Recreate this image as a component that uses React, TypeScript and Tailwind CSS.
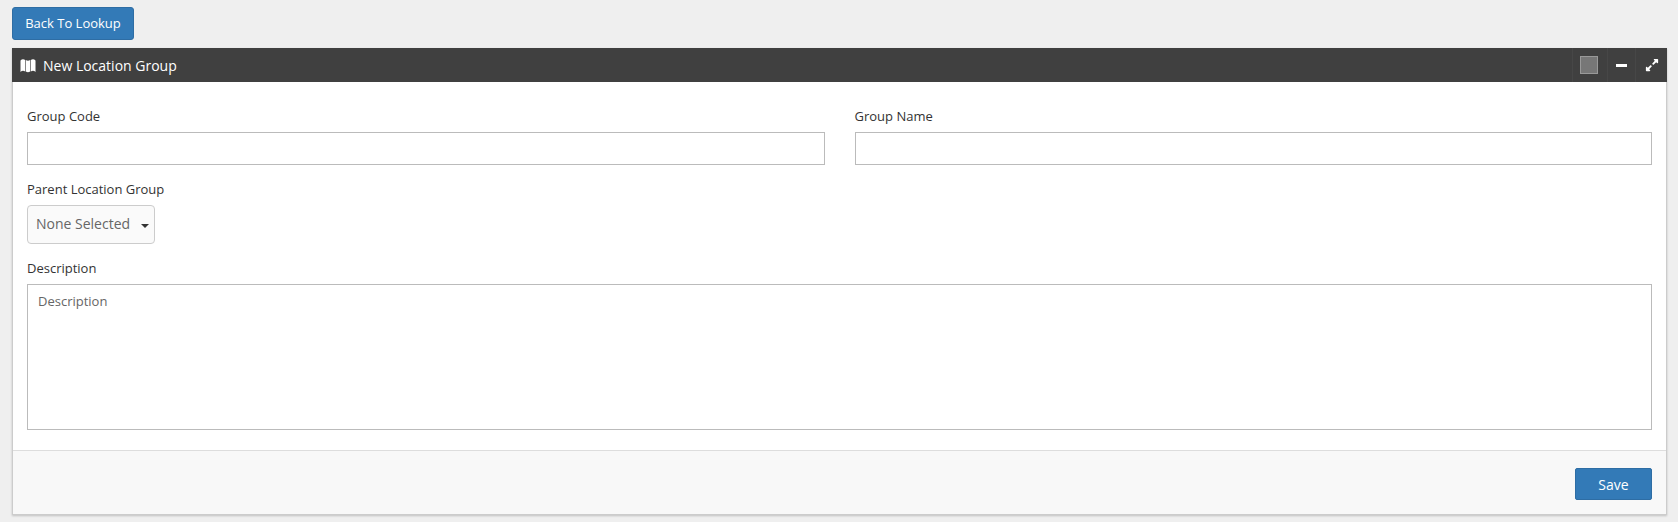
import React from "react";
import { FaExpandAlt } from "react-icons/fa";

export default function App() {
  return (
    <div className="min-h-[522px] bg-[#efefef] pt-[7px] pl-[12px] pr-[11px] text-[13px] text-[#333333] font-['Open_Sans',sans-serif]">
      <button className="block h-[33px] w-[122px] rounded-[3px] border border-[#2e6da4] bg-[#337ab7] text-[13px] text-white">
        Back To Lookup
      </button>
      <section className="mt-[8px] border-x border-b border-[#cccccc] bg-white shadow-[0_1px_2px_rgba(0,0,0,0.2)]">
        <header className="-mx-px flex h-[34px] items-center bg-[#404040] pl-[8px] text-white">
          <svg viewBox="0 0 16 16" className="h-[17px] w-[16px]" fill="currentColor">
            <path d="M0.5 3 C2 1.5 3.5 1.5 5.2 2.5 L5.2 14 C3.5 13 2 13 0.5 14.5 Z" />
            <path d="M5.8 2.5 C7.5 3.5 8.5 3.5 10.2 2.5 L10.2 14 C8.5 15 7.5 15 5.8 14 Z" />
            <path d="M10.8 2.5 C12.5 1.5 14 1.5 15.5 3 L15.5 14.5 C14 13 12.5 13 10.8 14 Z" />
          </svg>
          <h1 className="ml-[7px] text-[14px]">New Location Group</h1>
          <div className="ml-auto flex h-full items-center">
            <div className="flex h-full w-[36px] items-center justify-center border-x border-[#474747] pr-[2px]">
              <span className="block h-[18px] w-[18px] border border-[#999999] bg-[#777777]" />
            </div>
            <div className="flex h-full w-[28px] items-center justify-center border-r border-[#474747]">
              <span className="block h-[3px] w-[11px] bg-white" />
            </div>
            <div className="flex h-full w-[31px] items-center justify-center">
              <FaExpandAlt className="h-[14px] w-[14px]" />
            </div>
          </div>
        </header>
        <div className="px-[14px] pt-[24px] pb-[20px]">
          <div className="grid grid-cols-2 gap-x-[30px]">
            <div>
              <label className="block h-[26px] leading-[20px]">Group Code</label>
              <input className="block h-[33px] w-full border border-[#bbbbbb]" />
            </div>
            <div>
              <label className="block h-[26px] leading-[20px]">Group Name</label>
              <input className="block h-[33px] w-full border border-[#bbbbbb]" />
            </div>
          </div>
          <label className="mt-[14px] block h-[26px] leading-[20px]">Parent Location Group</label>
          <button className="flex h-[39px] w-[128px] items-center rounded-[4px] border border-[#cccccc] bg-[#fafafa] pb-[2px] pl-[8px] text-[14px] text-[#666666]">
            None Selected
            <span className="ml-[11px] mt-[4px] h-0 w-0 border-x-[4px] border-t-[4px] border-x-transparent border-t-[#333333]" />
          </button>
          <label className="mt-[14px] block h-[26px] leading-[20px]">Description</label>
          <textarea
            placeholder="Description"
            className="block h-[146px] w-full resize-none border border-[#bbbbbb] px-[10px] py-[7px] text-[13px] placeholder:text-[#666666]"
          />
        </div>
        <footer className="flex h-[64px] items-start justify-end border-t border-[#dddddd] bg-[#f8f8f8] pt-[17px] pr-[14px]">
          <button className="h-[32px] w-[77px] rounded-[2px] border border-[#2e6da4] bg-[#337ab7] text-[14px] text-white">
            Save
          </button>
        </footer>
      </section>
    </div>
  );
}
